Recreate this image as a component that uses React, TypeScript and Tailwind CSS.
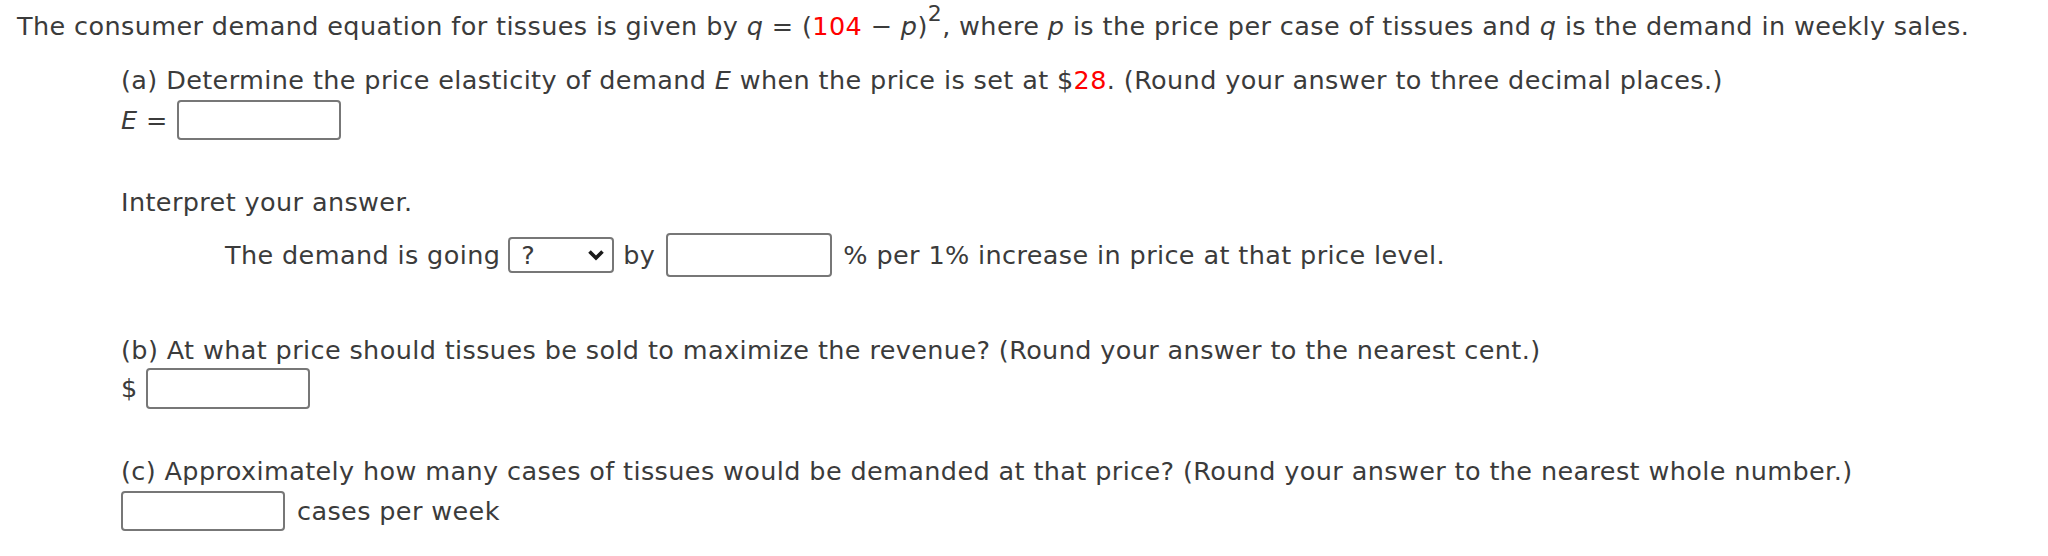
import React from 'react';

const Box = ({ className = '' }: { className?: string }) => (
  <div className={`h-[40px] w-[164px] shrink-0 rounded-[4px] border-2 border-[#777777] bg-white ${className}`} />
);

export default function App() {
  return (
    <div className="min-h-[556px] w-[2048px] bg-white pl-[17px] pt-[8px] text-[25.5px] tracking-[0.38px] text-[#3b3b3b] [font-family:'DejaVu_Sans',Verdana,sans-serif]">
      <p className="leading-[36px] whitespace-nowrap">
        The consumer demand equation for tissues is given by <i>q</i> = (<span className="text-[#ff0000]">104</span> − <i>p</i>)
        <sup className="relative -top-[14px] text-[22px]">2</sup>, where <i>p</i> is the price per case of tissues and <i>q</i> is the demand in weekly sales.
      </p>

      <div className="ml-[104px]">
        {/* part a */}
        <p className="mt-[18px] leading-[36px] whitespace-nowrap">
          (a) Determine the price elasticity of demand <i>E</i> when the price is set at $<span className="text-[#ff0000]">28</span>. (Round your answer to three decimal places.)
        </p>
        <div className="mt-[2px] flex items-center">
          <span className="whitespace-pre"><i>E</i> = </span>
          <Box className="ml-[1px]" />
        </div>

        <p className="mt-[44px] leading-[36px]">Interpret your answer.</p>
        <div className="mt-[13px] ml-[104px] flex h-[44px] items-center whitespace-nowrap">
          <span>The demand is going</span>
          <div className="ml-[8px] flex h-[36px] w-[106px] items-center justify-between rounded-[4px] border-2 border-[#777777] bg-white pl-[11px] pr-[7px]">
            <span>?</span>
            <svg width="18" height="14" viewBox="0 0 18 14">
              <polyline points="2.5,3.5 9,10 15.5,3.5" fill="none" stroke="#1a1a1a" strokeWidth="3.6" />
            </svg>
          </div>
          <span className="ml-[9px]">by</span>
          <Box className="ml-[11px] h-[44px] w-[166px]" />
          <span className="ml-[11px]">% per 1% increase in price at that price level.</span>
        </div>

        {/* part b */}
        <p className="mt-[55px] leading-[36px] whitespace-nowrap">
          (b) At what price should tissues be sold to maximize the revenue? (Round your answer to the nearest cent.)
        </p>
        <div className="flex items-center">
          <span>$</span>
          <Box className="ml-[8px] h-[41px]" />
        </div>

        {/* part c */}
        <p className="mt-[44px] leading-[36px] whitespace-nowrap">
          (c) Approximately how many cases of tissues would be demanded at that price? (Round your answer to the nearest whole number.)
        </p>
        <div className="mt-[2px] flex items-center">
          <Box />
          <span className="ml-[12px]">cases per week</span>
        </div>
      </div>
    </div>
  );
}
